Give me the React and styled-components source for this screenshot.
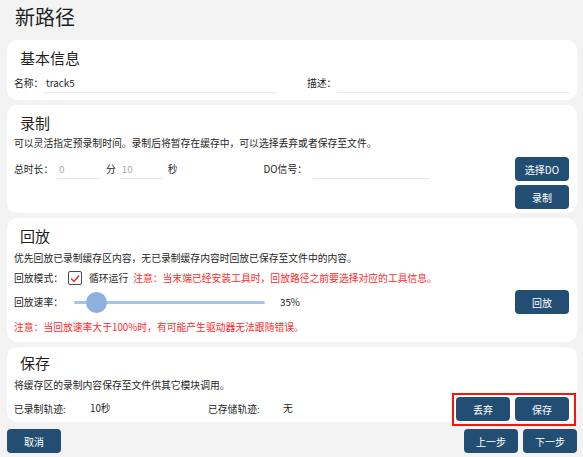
import styled, { createGlobalStyle } from 'styled-components';

const GlobalStyle = createGlobalStyle`
  html, body {
    margin: 0;
    padding: 0;
    background: #f3f3f3;
  }
  body {
    font-family: "Noto Sans CJK SC", "Noto Sans", sans-serif;
    color: #262626;
  }
`

const Page = styled.div`
  width: 583px;
  height: 457px;
  box-sizing: border-box;
  padding: 2px 6px 0 7px;
  display: flex;
  flex-direction: column;
  gap: 5px;
  overflow: hidden;
  font-size: 9.8px;
`

const Title = styled.h1`
  margin: 0 0 3px 8px;
  font-size: 20px;
  font-weight: 400;
  line-height: 30px;
  color: #1f1f1f;
`

const Card = styled.section`
  background: #fff;
  border-radius: 10px;
  padding: ${p => p.$pt}px 8px ${p => p.$pb}px 7px;
  display: flex;
  flex-direction: column;
`

const Heading = styled.h2`
  margin: 0 0 0 6px;
  font-size: 15px;
  font-weight: 400;
  line-height: 20px;
  color: #1f1f1f;
`

const Text = styled.div`
  margin-top: ${p => p.$mt || 0}px;
  margin-left: ${p => p.$ml || 0}px;
  font-size: 9.8px;
  line-height: 16px;
  color: ${p => (p.$warn ? '#ff2b2b' : '#262626')};
  white-space: nowrap;
`

const Grid = styled.div`
  margin-top: 5px;
  display: grid;
  grid-template-columns: 1fr 1fr;
  column-gap: 31px;
`

const Field = styled.div`
  display: flex;
  align-items: center;
`

const Label = styled.span`
  line-height: 16px;
  white-space: nowrap;
  width: ${p => (p.$w ? `${p.$w}px` : 'auto')};
  flex-shrink: 0;
`

const Input = styled.input`
  box-sizing: border-box;
  flex: ${p => (p.$w ? 'none' : '1')};
  width: ${p => (p.$w ? `${p.$w}px` : 'auto')};
  min-width: 0;
  height: 20px;
  margin: 0 ${p => p.$mr || 0}px 0 ${p => p.$ml || 0}px;
  padding: 0 2px;
  border: none;
  border-bottom: 1px solid #e6e6e6;
  background: transparent;
  font-family: inherit;
  font-size: 9.8px;
  color: #262626;
  outline: none;

  &::placeholder {
    color: #a8a8a8;
  }
`

const Body = styled.div`
  margin-top: ${p => p.$mt || 0}px;
  display: flex;
  align-items: ${p => p.$align || 'flex-start'};
`

const FieldsRow = styled.div`
  flex: 1;
  height: 24px;
  display: flex;
  align-items: center;
`

const Unit = styled.span`
  margin-right: ${p => p.$mr || 0}px;
`

const ButtonColumn = styled.div`
  display: flex;
  flex-direction: column;
  gap: 4px;
`

const Button = styled.button`
  width: 54px;
  height: 24px;
  border: none;
  border-radius: 4px;
  background: #234e74;
  color: #fff;
  font-family: inherit;
  font-size: 10px;
  padding: 0;
  cursor: pointer;
`

const ModeRow = styled.div`
  margin-top: 2px;
  height: 20px;
  display: flex;
  align-items: center;
`

const CheckBox = styled.span`
  box-sizing: border-box;
  width: 14px;
  height: 14px;
  margin: 0 7px 0 0;
  border: 1.5px solid #4a4a4a;
  border-radius: 2px;
  display: inline-flex;
  align-items: center;
  justify-content: center;
`

const SliderRow = styled.div`
  flex: 1;
  height: 24px;
  display: flex;
  align-items: center;
`

const Track = styled.div`
  position: relative;
  width: 191px;
  height: 24px;
  margin-right: 15px;

  &::before {
    content: '';
    position: absolute;
    left: 0;
    right: 0;
    top: 11px;
    height: 3px;
    border-radius: 2px;
    background: #a6c3e8;
  }
`

const Thumb = styled.span`
  position: absolute;
  top: 2px;
  left: ${p => p.$left}px;
  width: 21px;
  height: 21px;
  border-radius: 50%;
  background: #8db0dc;
`

const Stat = styled.div`
  width: 194px;
  display: flex;
`

const Spacer = styled.div`
  flex: 1;
`

const Highlighted = styled.div`
  position: relative;
  display: flex;
  gap: 5px;

  &::after {
    content: '';
    position: absolute;
    top: -4px;
    left: -4px;
    right: -7px;
    bottom: -5px;
    border: 2px solid #ff1010;
    pointer-events: none;
  }
`

const Footer = styled.div`
  margin-top: 2px;
  display: flex;
  justify-content: space-between;
`

const FooterRight = styled.div`
  display: flex;
  gap: 5px;
`

const Check = () => (
  <svg width="10" height="9" viewBox="0 0 10 9">
    <path d="M1 4.5 L4 7.5 L9 1.5" fill="none" stroke="#e0303a" strokeWidth="1.5" />
  </svg>
)

export default function App() {
  return (
    <Page>
      <GlobalStyle />
      <Title>新路径</Title>

      <Card $pt={8} $pb={7}>
        <Heading>基本信息</Heading>
        <Grid>
          <Field>
            <Label $w={30}>名称：</Label>
            <Input defaultValue="track5" />
          </Field>
          <Field>
            <Label $w={30}>描述：</Label>
            <Input />
          </Field>
        </Grid>
      </Card>

      <Card $pt={8} $pb={4}>
        <Heading>录制</Heading>
        <Text $mt={2}>可以灵活指定预录制时间。录制后将暂存在缓存中，可以选择丢弃或者保存至文件。</Text>
        <Body $mt={6}>
          <FieldsRow>
            <Label $w={43}>总时长：</Label>
            <Input $w={43} $mr={6} placeholder="0" />
            <Unit $mr={4}>分</Unit>
            <Input $w={43} $mr={5} placeholder="10" />
            <Unit $mr={86}>秒</Unit>
            <Label $w={49}>DO信号：</Label>
            <Input $w={116} />
          </FieldsRow>
          <ButtonColumn>
            <Button>选择DO</Button>
            <Button>录制</Button>
          </ButtonColumn>
        </Body>
      </Card>

      <Card $pt={8} $pb={7}>
        <Heading>回放</Heading>
        <Text $mt={4}>优先回放已录制缓存区内容，无已录制缓存内容时回放已保存至文件中的内容。</Text>
        <ModeRow>
          <Label $w={54}>回放模式：</Label>
          <CheckBox><Check /></CheckBox>
          <span>循环运行</span>
          <Text $warn $ml={5}>注意：当末端已经安装工具时，回放路径之前要选择对应的工具信息。</Text>
        </ModeRow>
        <Body $mt={2} $align="center">
          <SliderRow>
            <Label $w={60}>回放速率：</Label>
            <Track>
              <Thumb $left={12} />
            </Track>
            <span>35%</span>
          </SliderRow>
          <Button>回放</Button>
        </Body>
        <Text $mt={5} $warn>注意：当回放速率大于100%时，有可能产生驱动器无法跟随错误。</Text>
      </Card>

      <Card $pt={6} $pb={1}>
        <Heading>保存</Heading>
        <Text $mt={4}>将缓存区的录制内容保存至文件供其它模块调用。</Text>
        <Body $mt={4} $align="center">
          <Stat>
            <Label $w={76}>已录制轨迹:</Label>
            <span>10秒</span>
          </Stat>
          <Stat>
            <Label $w={75}>已存储轨迹:</Label>
            <span>无</span>
          </Stat>
          <Spacer />
          <Highlighted>
            <Button>丢弃</Button>
            <Button>保存</Button>
          </Highlighted>
        </Body>
      </Card>

      <Footer>
        <Button>取消</Button>
        <FooterRight>
          <Button>上一步</Button>
          <Button>下一步</Button>
        </FooterRight>
      </Footer>
    </Page>
  )
}
